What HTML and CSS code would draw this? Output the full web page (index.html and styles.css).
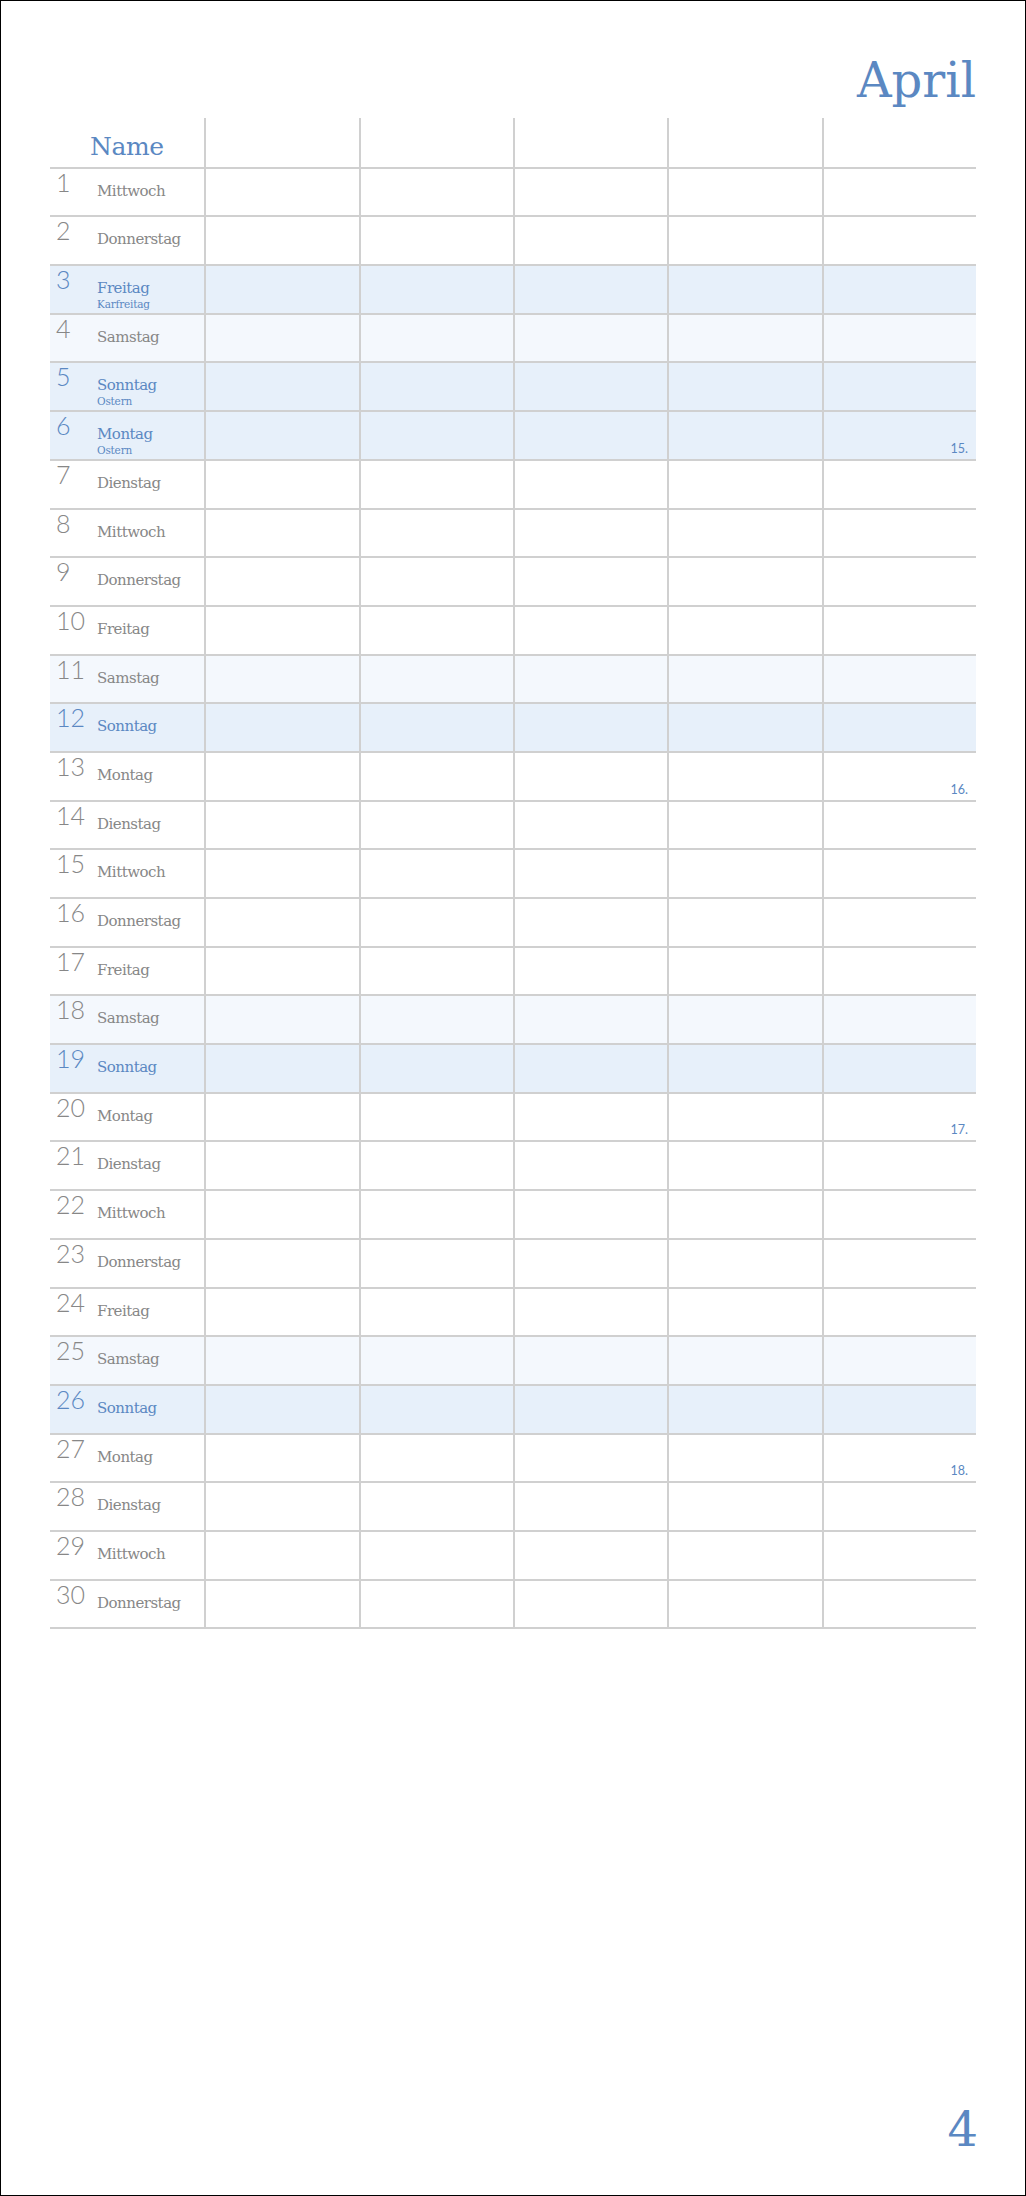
FILE: index.html
```html
<!DOCTYPE html>
<html lang="de">
<head>
    <meta charset="UTF-8">
    <meta name="viewport" content="width=device-width, initial-scale=1.0">
    <title>April</title>
    <link rel="stylesheet" href="styles.css">
</head>
<body>
    <div class="page">
        <h1 class="month">April</h1>

        <div class="planner">
            <div class="row head">
                <div class="name">Name</div><div></div><div></div><div></div><div></div><div></div>
            </div>

            <div class="row">
                <div class="day"><span class="num">1</span><span class="wd">Mittwoch</span></div><div></div><div></div><div></div><div></div><div></div>
            </div>
            <div class="row">
                <div class="day"><span class="num">2</span><span class="wd">Donnerstag</span></div><div></div><div></div><div></div><div></div><div></div>
            </div>
            <div class="row holiday">
                <div class="day"><span class="num">3</span><span class="wd">Freitag<small>Karfreitag</small></span></div><div></div><div></div><div></div><div></div><div></div>
            </div>
            <div class="row sat">
                <div class="day"><span class="num">4</span><span class="wd">Samstag</span></div><div></div><div></div><div></div><div></div><div></div>
            </div>
            <div class="row holiday">
                <div class="day"><span class="num">5</span><span class="wd">Sonntag<small>Ostern</small></span></div><div></div><div></div><div></div><div></div><div></div>
            </div>
            <div class="row holiday">
                <div class="day"><span class="num">6</span><span class="wd">Montag<small>Ostern</small></span></div><div></div><div></div><div></div><div></div><div class="kw">15.</div>
            </div>
            <div class="row">
                <div class="day"><span class="num">7</span><span class="wd">Dienstag</span></div><div></div><div></div><div></div><div></div><div></div>
            </div>
            <div class="row">
                <div class="day"><span class="num">8</span><span class="wd">Mittwoch</span></div><div></div><div></div><div></div><div></div><div></div>
            </div>
            <div class="row">
                <div class="day"><span class="num">9</span><span class="wd">Donnerstag</span></div><div></div><div></div><div></div><div></div><div></div>
            </div>
            <div class="row">
                <div class="day"><span class="num">10</span><span class="wd">Freitag</span></div><div></div><div></div><div></div><div></div><div></div>
            </div>
            <div class="row sat">
                <div class="day"><span class="num">11</span><span class="wd">Samstag</span></div><div></div><div></div><div></div><div></div><div></div>
            </div>
            <div class="row holiday">
                <div class="day"><span class="num">12</span><span class="wd">Sonntag</span></div><div></div><div></div><div></div><div></div><div></div>
            </div>
            <div class="row">
                <div class="day"><span class="num">13</span><span class="wd">Montag</span></div><div></div><div></div><div></div><div></div><div class="kw">16.</div>
            </div>
            <div class="row">
                <div class="day"><span class="num">14</span><span class="wd">Dienstag</span></div><div></div><div></div><div></div><div></div><div></div>
            </div>
            <div class="row">
                <div class="day"><span class="num">15</span><span class="wd">Mittwoch</span></div><div></div><div></div><div></div><div></div><div></div>
            </div>
            <div class="row">
                <div class="day"><span class="num">16</span><span class="wd">Donnerstag</span></div><div></div><div></div><div></div><div></div><div></div>
            </div>
            <div class="row">
                <div class="day"><span class="num">17</span><span class="wd">Freitag</span></div><div></div><div></div><div></div><div></div><div></div>
            </div>
            <div class="row sat">
                <div class="day"><span class="num">18</span><span class="wd">Samstag</span></div><div></div><div></div><div></div><div></div><div></div>
            </div>
            <div class="row holiday">
                <div class="day"><span class="num">19</span><span class="wd">Sonntag</span></div><div></div><div></div><div></div><div></div><div></div>
            </div>
            <div class="row">
                <div class="day"><span class="num">20</span><span class="wd">Montag</span></div><div></div><div></div><div></div><div></div><div class="kw">17.</div>
            </div>
            <div class="row">
                <div class="day"><span class="num">21</span><span class="wd">Dienstag</span></div><div></div><div></div><div></div><div></div><div></div>
            </div>
            <div class="row">
                <div class="day"><span class="num">22</span><span class="wd">Mittwoch</span></div><div></div><div></div><div></div><div></div><div></div>
            </div>
            <div class="row">
                <div class="day"><span class="num">23</span><span class="wd">Donnerstag</span></div><div></div><div></div><div></div><div></div><div></div>
            </div>
            <div class="row">
                <div class="day"><span class="num">24</span><span class="wd">Freitag</span></div><div></div><div></div><div></div><div></div><div></div>
            </div>
            <div class="row sat">
                <div class="day"><span class="num">25</span><span class="wd">Samstag</span></div><div></div><div></div><div></div><div></div><div></div>
            </div>
            <div class="row holiday">
                <div class="day"><span class="num">26</span><span class="wd">Sonntag</span></div><div></div><div></div><div></div><div></div><div></div>
            </div>
            <div class="row">
                <div class="day"><span class="num">27</span><span class="wd">Montag</span></div><div></div><div></div><div></div><div></div><div class="kw">18.</div>
            </div>
            <div class="row">
                <div class="day"><span class="num">28</span><span class="wd">Dienstag</span></div><div></div><div></div><div></div><div></div><div></div>
            </div>
            <div class="row">
                <div class="day"><span class="num">29</span><span class="wd">Mittwoch</span></div><div></div><div></div><div></div><div></div><div></div>
            </div>
            <div class="row">
                <div class="day"><span class="num">30</span><span class="wd">Donnerstag</span></div><div></div><div></div><div></div><div></div><div></div>
            </div>
        </div>

        <div class="pagenum">4</div>
    </div>
</body>
</html>
```

FILE: styles.css
```css
* {
    box-sizing: border-box;
}

body {
    margin: 0;
    background: #fff;
    font-family: "DejaVu Serif", serif;
}

.page {
    width: 1026px;
    height: 2196px;
    border: 1px solid #000;
    padding: 55px 49px 42px;
    display: flex;
    flex-direction: column;
}

.month {
    margin: 0 0 14px;
    text-align: right;
    font-size: 48px;
    line-height: 48px;
    font-weight: normal;
    color: #5b88c2;
}

.planner {
    width: 926px;
}

.row {
    display: grid;
    grid-template-columns: repeat(6, 1fr);
    height: 48.7px;
    border-bottom: 2px solid #d0d0d0;
}

.row > div + div {
    border-left: 2px solid #d0d0d0;
}

.row.head {
    height: 50.7px;
}

.name {
    padding: 16px 0 0 40px;
    font-size: 25px;
    line-height: 26px;
    letter-spacing: -0.4px;
    color: #5b88c2;
}

.day {
    display: grid;
    grid-template-columns: 41px 1fr;
    padding-left: 6px;
    color: #878787;
}

.num {
    margin-top: 1px;
    font-family: Lato, "Open Sans", sans-serif;
    font-weight: 300;
    font-size: 25px;
    line-height: 25px;
}

.wd {
    display: flex;
    flex-direction: column;
    margin-top: 14px;
    font-size: 15px;
    line-height: 16px;
    letter-spacing: -0.5px;
}

.wd small {
    font-size: 10.5px;
    line-height: 16px;
    letter-spacing: -0.2px;
}

.sat {
    background: #f4f8fd;
}

.holiday {
    background: #e7f0fa;
}

.holiday .day {
    color: #5b88c2;
}

.kw {
    display: flex;
    justify-content: flex-end;
    align-items: flex-end;
    padding: 0 8px 3px 0;
    font-family: Lato, sans-serif;
    font-size: 12.5px;
    color: #5b88c2;
}

.pagenum {
    margin-top: auto;
    margin-right: -2px;
    text-align: right;
    font-size: 48px;
    line-height: 48px;
    color: #5b88c2;
}
```
